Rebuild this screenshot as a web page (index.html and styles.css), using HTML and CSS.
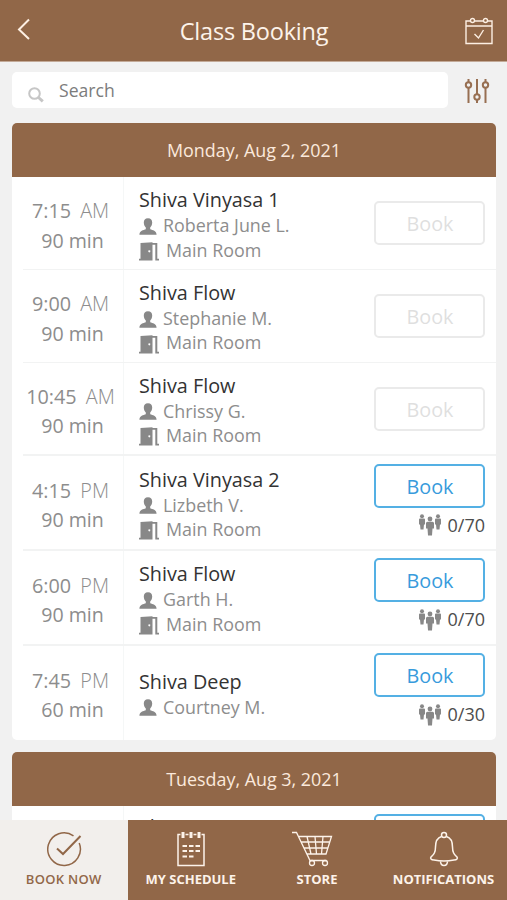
FILE: index.html
```html
<!DOCTYPE html>
<html lang="en">
<head>
<meta charset="utf-8">
<title>Class Booking</title>
<link rel="stylesheet" href="styles.css">
</head>
<body>
<svg class="defs" aria-hidden="true">
  <symbol id="person" viewBox="0 0 18 17"><path d="M9 .3c2.900 0 4.200 1.800 4.200 4.300 0 2.200-.9 3.900-2 5v1.600c2.300 1 6.400 1.400 6.400 5.500H.4c0-4.100 4.100-4.500 6.400-5.500V9.600c-1.100-1.100-2-2.800-2-5C4.800 2.100 6.100.3 9 .3z"/></symbol>
  <symbol id="door" viewBox="0 0 20 19"><path fill-rule="evenodd" d="M1.500 1 13.500 .3V18.500H0v-1.700h1.500zM10.300 8.300a1 1 0 1 0 .01 0z"/><path d="M13 1h5.300V16.800H20v1.700h-3.700V2.800H13z"/></symbol>
  <symbol id="group" viewBox="0 0 22 22"><g id="one"><circle cx="3" cy="2.200" r="2"/><path d="M1 4.500h4q1 0 1 1v5H5L4.500 15.500h-3L1 10.500H0v-5q0-1 1-1z"/></g><use href="#one" x="16"/><circle cx="11" cy="5" r="2.400"/><path d="M8.500 7.800h5q1.500 0 1.500 1.500v5.200h-1.500L13 21.500H9l-.5-7H7V9.300q0-1.500 1.500-1.500z"/></symbol>
</svg>
<div class="screen">
  <header class="topbar">
    <svg class="back" viewBox="0 0 14 22"><path d="M12 1.500 2 11.500l10 9.500"/></svg>
    <h1>Class Booking</h1>
    <svg class="calendar" viewBox="0 0 28 28"><path d="M5.500 4H1v22.500h26V4h-4.500M9.500 4h9M1 9h26M9.500 17l4 4 5-8"/><circle cx="7.500" cy="3.500" r="2"/><circle cx="20.500" cy="3.500" r="2"/></svg>
  </header>
  <div class="searchbar">
    <div class="search">
      <svg viewBox="0 0 16 16"><circle cx="6.500" cy="6.500" r="5.300"/><path d="m10.500 10.500 4.300 3.800" class="handle"/></svg>
      <span>Search</span>
    </div>
    <svg class="filter" viewBox="0 0 26 26"><path d="M4.500 1v3.500M4.500 9.500V25M13 1v15.500M13 21.500V25M21.500 1v3.500M21.500 9.500V25"/><circle cx="4.500" cy="7" r="2.700"/><circle cx="13" cy="19" r="2.700"/><circle cx="21.500" cy="7" r="2.700"/></svg>
  </div>
  <main>
    <section class="day">
      <h2>Monday, Aug 2, 2021</h2>
      <article class="row">
        <div class="time"><p>7:15 <i>AM</i></p><p class="len">90 min</p></div>
        <div class="info"><h3>Shiva Vinyasa 1</h3><p><svg class="person"><use href="#person"/></svg>Roberta June L.</p><p><svg class="door"><use href="#door"/></svg>Main Room</p></div>
        <div class="action"><button class="book off">Book</button></div>
      </article>
      <article class="row">
        <div class="time"><p>9:00 <i>AM</i></p><p class="len">90 min</p></div>
        <div class="info"><h3>Shiva Flow</h3><p><svg class="person"><use href="#person"/></svg>Stephanie M.</p><p><svg class="door"><use href="#door"/></svg>Main Room</p></div>
        <div class="action"><button class="book off">Book</button></div>
      </article>
      <article class="row">
        <div class="time"><p>10:45 <i>AM</i></p><p class="len">90 min</p></div>
        <div class="info"><h3>Shiva Flow</h3><p><svg class="person"><use href="#person"/></svg>Chrissy G.</p><p><svg class="door"><use href="#door"/></svg>Main Room</p></div>
        <div class="action"><button class="book off">Book</button></div>
      </article>
      <article class="row tall">
        <div class="time"><p>4:15 <i>PM</i></p><p class="len">90 min</p></div>
        <div class="info"><h3>Shiva Vinyasa 2</h3><p><svg class="person"><use href="#person"/></svg>Lizbeth V.</p><p><svg class="door"><use href="#door"/></svg>Main Room</p></div>
        <div class="action"><button class="book">Book</button><div class="count"><svg><use href="#group"/></svg>0/70</div></div>
      </article>
      <article class="row tall">
        <div class="time"><p>6:00 <i>PM</i></p><p class="len">90 min</p></div>
        <div class="info"><h3>Shiva Flow</h3><p><svg class="person"><use href="#person"/></svg>Garth H.</p><p><svg class="door"><use href="#door"/></svg>Main Room</p></div>
        <div class="action"><button class="book">Book</button><div class="count"><svg><use href="#group"/></svg>0/70</div></div>
      </article>
      <article class="row tall">
        <div class="time"><p>7:45 <i>PM</i></p><p class="len">60 min</p></div>
        <div class="info"><h3>Shiva Deep</h3><p><svg class="person"><use href="#person"/></svg>Courtney M.</p></div>
        <div class="action"><button class="book">Book</button><div class="count"><svg><use href="#group"/></svg>0/30</div></div>
      </article>
    </section>
    <section class="day">
      <h2>Tuesday, Aug 3, 2021</h2>
      <article class="row tall next">
        <div class="time"></div>
        <div class="info"><h3>Shiva Vinyasa 1</h3></div>
        <div class="action"><button class="book" aria-label="Book"></button></div>
      </article>
    </section>
  </main>
  <nav>
    <a class="tab active"><svg viewBox="0 0 36 36"><path d="M27.500 4.800A16.300 16.300 0 1 0 33.200 12"/><path class="check" d="M11 17.500l6 5.500L34.500 5"/></svg><span>BOOK NOW</span></a>
    <a class="tab"><svg viewBox="0 0 36 36"><path d="M7.500 3.500H5V34.500h26V3.500h-2.500M12.500 3.500h3M20.500 3.500h3"/><path class="bold" d="M10 1v6M18 1v6M26 1v6"/><path class="dash" d="M9.500 15h18M9.500 20h18M9.500 25.500h11"/></svg><span>MY SCHEDULE</span></a>
    <a class="tab"><svg class="cart" viewBox="0 0 42 36"><path d="M1 1.500h4.500L19 29.500h16.500M8 5.500h32.500L35 23H16M10.500 11h28M13 17h24M16 5.500l4 17.500M24 5.500l1.500 17.500M32 5.500 30.500 23"/><circle cx="21" cy="32" r="2.500"/><circle cx="34" cy="32" r="2.500"/></svg><span>STORE</span></a>
    <a class="tab"><svg viewBox="0 0 36 36"><path d="M15.500 5.500C10.500 7 9.500 11 9.500 16c0 6-2 7.500-4.500 10-1 1.500 0 3 3 3q10 2 20 0c3 0 4-1.500 3-3-2.500-2.500-4.500-4-4.500-10 0-5-1-9-6-10.500M14.500 30c0 6 7 6 7 0"/><circle cx="18" cy="4" r="2.500"/></svg><span>NOTIFICATIONS</span></a>
  </nav>
</div>
</body>
</html>
```
FILE: styles.css
```css
* { box-sizing: border-box; margin: 0; }
body { background: #f1f1f1; font-family: "Open Sans", sans-serif; }
.defs { display: none; }
svg { flex: none; }
.screen { width: 507px; height: 900px; display: flex; flex-direction: column; overflow: hidden; }

.topbar { flex: none; height: 62px; padding: 1px 14px 0 17px; background: #916748; display: grid; grid-template-columns: 28px 1fr 28px; align-items: center; border-bottom: 1px solid #c3aa98; }
.topbar h1 { font-size: 23.500px; font-weight: 400; color: #fdf3ea; text-align: center; line-height: 32px; letter-spacing: -.2px; padding-right: 2px; }
.topbar svg { fill: none; stroke: #fdefe3; }
.back { width: 14px; height: 22px; stroke-width: 2; margin-bottom: 5px; }
.calendar { width: 28px; height: 28px; stroke-width: 1.4; margin-bottom: 1px; }

.searchbar { flex: none; height: 61px; padding: 10px 17px 0 12px; display: flex; justify-content: space-between; align-items: flex-start; }
.search { width: 436px; height: 36px; background: #fff; border-radius: 5px; display: flex; align-items: center; padding-left: 16px; gap: 15px; color: #7c7c7c; font-size: 17.600px; }
.search svg { width: 16px; height: 16px; margin-top: 9px; fill: none; stroke: #c6c6c6; stroke-width: 2; }
.search .handle { stroke-width: 3; }
.filter { width: 26px; height: 26px; margin-top: 6px; fill: none; stroke: #976f52; stroke-width: 2; }

main { flex: 1; min-height: 0; overflow: hidden; padding: 0 11px 0 12px; display: flex; flex-direction: column; gap: 12px; }
.day { flex: none; background: #fff; border-radius: 5px; overflow: hidden; }
.day h2 { height: 54px; background: #916748; color: #fbe9dc; font-size: 17.900px; line-height: 55px; font-weight: 400; text-align: center; }
.row { height: 92.800px; display: grid; grid-template-columns: 112px 1fr 111px; padding-right: 11px; position: relative; }
.row + .row::before { content: ""; position: absolute; top: -1px; left: 11px; right: 0; height: 1.500px; background: #f2f3f3; }
.tall { height: 94.850px; }
.time, .info { display: flex; flex-direction: column; justify-content: center; }
.time { border-right: 1px solid #f5f7f7; color: #8d8d8d; font-size: 19.800px; line-height: 29.500px; text-align: center; padding: 5px 0 0 6px; white-space: nowrap; }
.time i { font-style: normal; font-weight: 300; margin-left: 4px; }
.time .len { padding-left: 4px; font-size: 19.600px; }
.info { padding: 2.500px 0 0 15px; }
.info h3 { color: #333; font-size: 19.800px; font-weight: 400; line-height: 26px; }
.info p { display: flex; align-items: center; color: #8d8d8d; font-size: 17.900px; line-height: 24.500px; }
.info svg { fill: #888; }
.person { width: 18px; height: 17px; margin: 2px 6px 0 0; }
.door { width: 20px; height: 19px; margin: 3px 7px 0 0; }
.action { display: flex; flex-direction: column; justify-content: center; }
.tall .action { justify-content: flex-start; padding-top: 8.200px; }
.book { flex: none; width: 111px; height: 44px; border: 2px solid #54b0e4; border-radius: 5px; background: #fff; color: #389bdc; font: 19.800px/38px "Open Sans", sans-serif; padding: 2px 0 0 1px; }
.off { border-color: #eaeaea; color: #dfdfdf; }
.count { display: flex; justify-content: flex-end; align-items: center; gap: 7px; color: #4d4d4d; font-size: 18px; line-height: 24px; margin-top: 5px; }
.count svg { width: 22px; height: 22px; fill: #888; margin-top: 1px; }
.next .info { justify-content: flex-start; padding-top: 8px; }

nav { flex: none; height: 80px; background: #916748; display: grid; grid-template-columns: 127.500px 126.500px 126px 127px; }
.tab { display: flex; flex-direction: column; align-items: center; padding-top: 11px; color: #fdf3ea; font-size: 13px; font-weight: 700; line-height: 18px; gap: 3px; white-space: nowrap; }
.tab svg { width: 36px; height: 36px; fill: none; stroke: currentColor; stroke-width: 1.500; }
.tab .cart { width: 42px; margin-left: -10px; stroke-width: 1.300; }
.tab .bold { stroke-width: 3; }
.tab .check { stroke-width: 2; }
.tab .dash { stroke-width: 2.200; stroke-dasharray: 4.500 2; }
.tab.active { background: #f2efec; color: #916748; font-weight: 600; letter-spacing: .3px; }
```
